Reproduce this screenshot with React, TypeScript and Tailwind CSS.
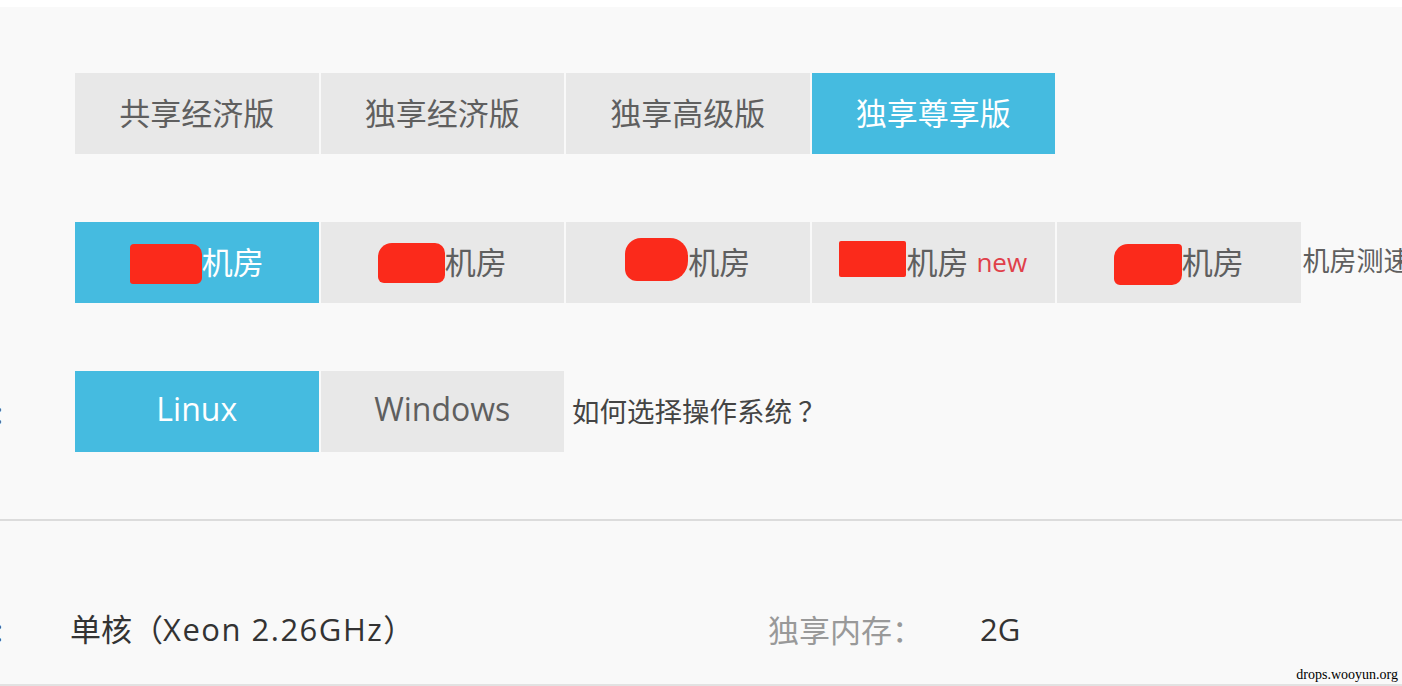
import React from 'react'

const fontStack = "font-['Noto_Sans_CJK_SC','Noto_Sans',sans-serif]"
const latin = "font-['Open_Sans','Noto_Sans',sans-serif]"

const plans = [
  { id: 'shared-eco', label: '共享经济版' },
  { id: 'dedicated-eco', label: '独享经济版' },
  { id: 'dedicated-pro', label: '独享高级版' },
  { id: 'dedicated-vip', label: '独享尊享版', active: true }
]

// the room names are blacked out with red marker in the screenshot
const rooms = [
  { id: 'room-1', blob: 'w-[72px] h-[40px] rounded-[4px_10px_6px_3px] mt-[8px]', active: true },
  { id: 'room-2', blob: 'w-[67px] h-[40px] rounded-[14px_10px_8px_6px] mt-[6px]' },
  { id: 'room-3', blob: 'w-[63px] h-[43px] rounded-[16px_18px_20px_12px] -mt-[2px]' },
  { id: 'room-4', blob: 'w-[67px] h-[36px] rounded-[2px] -mt-[2px]', isNew: true },
  { id: 'room-5', blob: 'w-[68px] h-[41px] rounded-[14px_4px_10px_6px] mt-[8px]' }
]

const systems = [
  { id: 'linux', label: 'Linux', active: true },
  { id: 'windows', label: 'Windows' }
]

const Tab = ({ active, children }: { active?: boolean; children: React.ReactNode }) => (
  <div
    className={`w-[243.5px] h-[81px] shrink-0 flex items-center justify-center pb-[5px] text-[31px] leading-none ${
      active ? 'bg-[#45bbe0] text-white' : 'bg-[#e8e8e8] text-[#5f5f5f]'
    }`}
  >
    {children}
  </div>
)

const CutLabel = ({ text }: { text: string }) => (
  <div className="w-[75px] shrink-0 flex justify-end pr-[72px] whitespace-nowrap text-[30px] text-[#555]">
    {text}
  </div>
)

const App = () => {
  return (
    <div className={`relative w-[1402px] h-[686px] overflow-hidden bg-[#f9f9f9] ${fontStack}`}>
      <div className="h-[7px] bg-white" />

      <div className="pt-[66px] flex flex-col gap-[68px]">
        {/* plan tabs */}
        <div className="flex pl-[75px] gap-[2px]">
          {plans.map((p) => (
            <Tab key={p.id} active={p.active}>{p.label}</Tab>
          ))}
        </div>

        {/* machine rooms */}
        <div className="flex items-center pl-[75px] gap-[2px]">
          {rooms.map((r) => (
            <Tab key={r.id} active={r.active}>
              <span className={`inline-block bg-[#fb2a1b] ${r.blob}`} />
              <span>机房</span>
              {r.isNew && <span className={`ml-[8px] mt-[3px] text-[26px] text-[#e0404a] ${latin}`}>new</span>}
            </Tab>
          ))}
          <span className="whitespace-nowrap pb-[4px] text-[27px] text-[#5f5f5f]">机房测速</span>
        </div>

        {/* operating system */}
        <div className="flex items-center">
          <CutLabel text="操作系统:" />
          <div className="flex gap-[2px]">
            {systems.map((s) => (
              <Tab key={s.id} active={s.active}>
                <span className={`${latin} text-[32px]`}>{s.label}</span>
              </Tab>
            ))}
          </div>
          <span className="ml-[8px] pb-[2px] whitespace-nowrap text-[27.5px] text-[#444]">如何选择操作系统 ？</span>
        </div>
      </div>

      <div className="mt-[67px] h-[2px] bg-[#dcdcdc]" />

      {/* spec row */}
      <div className="mt-[88px] h-[40px] flex items-center text-[31px]">
        <div className="w-[70px] shrink-0 flex justify-end pr-[67px] whitespace-nowrap text-[#444]">CPU:</div>
        <span className="w-[698px] whitespace-nowrap text-[#333]">
          单核（<span className={`${latin} text-[31px] tracking-[1.5px]`}>Xeon 2.26GHz</span>）
        </span>
        <span className="w-[212px] whitespace-nowrap text-[#999]">独享内存：</span>
        <span className={`text-[#333] ${latin}`}>2G</span>
      </div>

      <div className="mt-[35px] h-[2px] bg-[#e2e2e2]" />

      <span className="absolute right-[4px] bottom-[4px] text-[14px] leading-none text-black font-['Liberation_Serif',serif]">
        drops.wooyun.org
      </span>
    </div>
  )
}

export default App
